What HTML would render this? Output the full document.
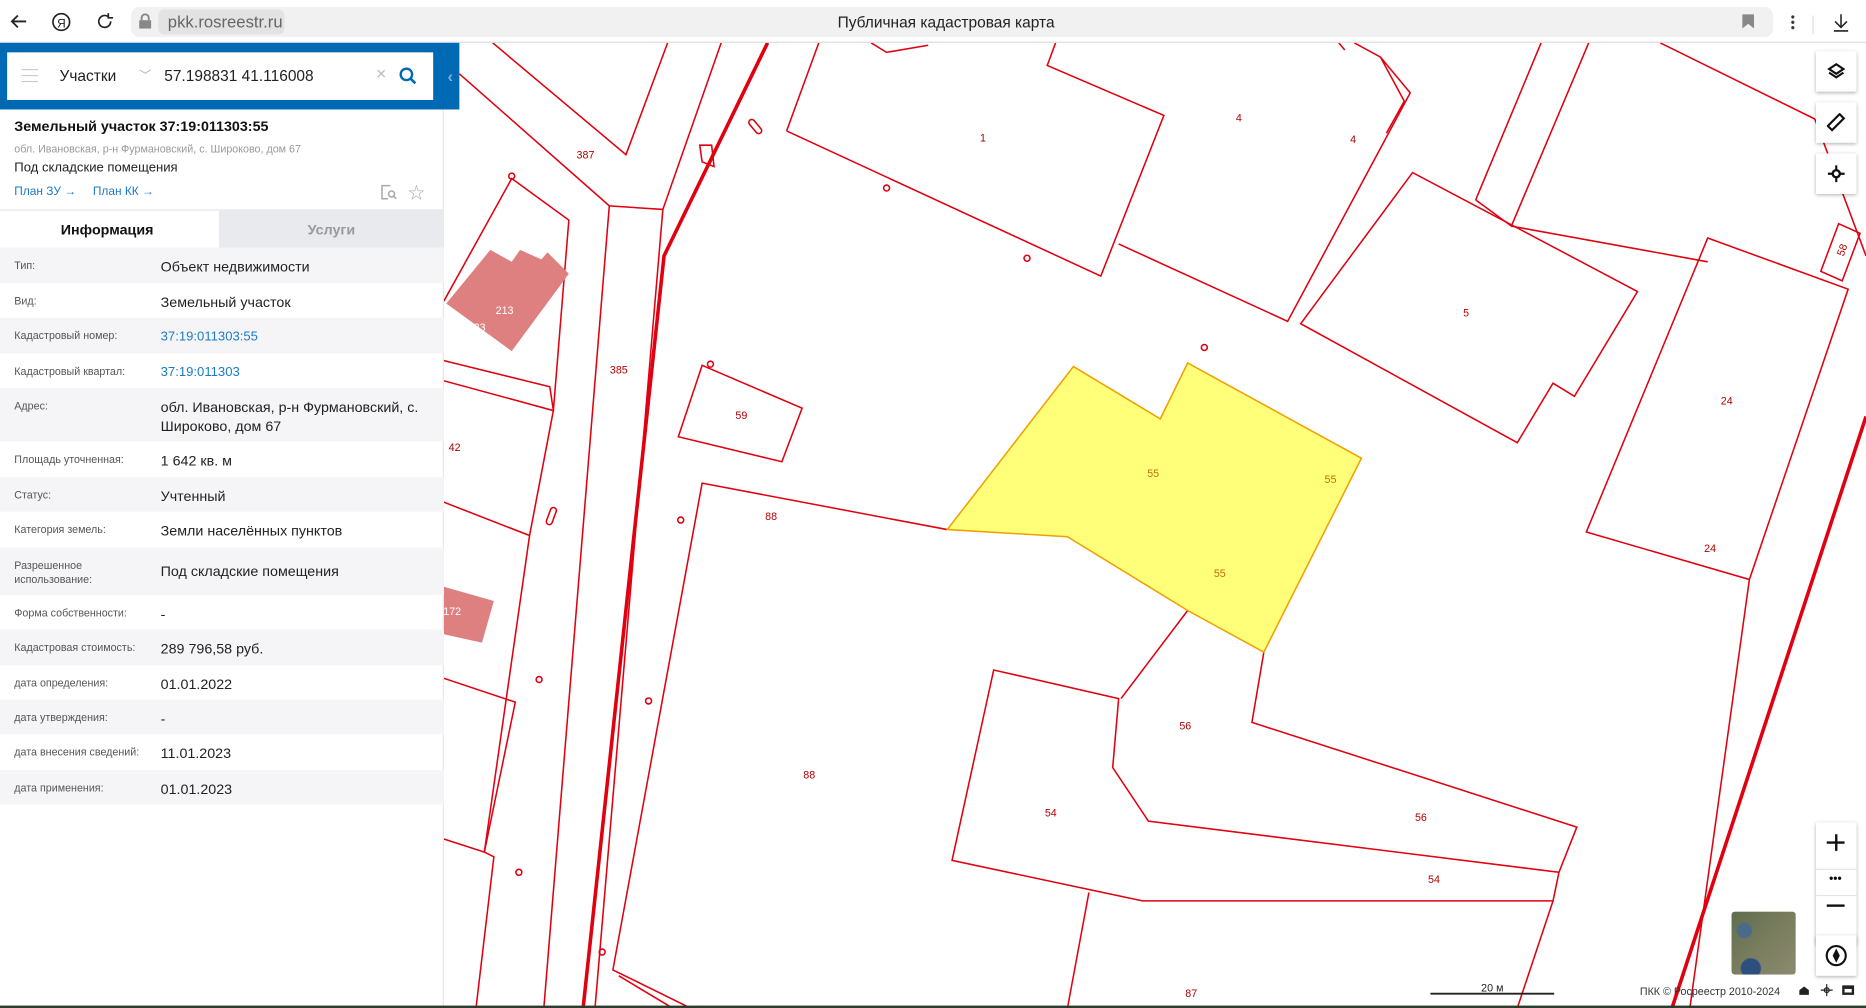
<!DOCTYPE html>
<html><head><meta charset="utf-8">
<style>
*{margin:0;padding:0;box-sizing:border-box}
html,body{width:1866px;height:1008px;overflow:hidden;background:#fff;font-family:"Liberation Sans","Noto Sans CJK SC",sans-serif}
#w{width:1568px;height:847px;transform:scale(1.19005);transform-origin:0 0;position:relative}
.top{position:absolute;left:0;top:0;width:1568px;height:36px;background:#fff;border-bottom:1px solid #ddd}
.url{position:absolute;left:110px;top:6px;width:1380px;height:25px;background:#f1f1f1;border-radius:7px}
.pill{position:absolute;left:133px;top:8px;width:106px;height:21px;background:#e3e3e3;border-radius:5px;color:#666;font-size:14px;line-height:21px;padding-left:8px}
.title{position:absolute;left:0;width:1590px;top:11px;text-align:center;font-size:13px;color:#222}
.panel{position:absolute;left:0;top:36px;width:373px;height:811px;background:#fff;border-right:1px solid #e6e6e6}
.blue{position:absolute;left:0;top:36px;width:386px;height:56px;background:#0069b4}
.sbox{position:absolute;left:6px;top:44px;width:358px;height:40px;background:#fff}
.row{position:absolute;left:0;width:373px;font-size:12px;color:#222}
.row .k{position:absolute;left:12px;top:9px;font-size:9px;color:#555;width:115px;line-height:12px}
.row .v{position:absolute;left:135px;top:8px;line-height:16px}
.g{background:#f5f5f7}
.map{position:absolute;left:373px;top:36px}
.btn{position:absolute;background:#fff;box-shadow:0 1px 3px rgba(0,0,0,.3);width:34px;height:34px}
</style></head><body><div id="w">
<div class="top">
<svg style="position:absolute;left:8px;top:10px" width="16" height="16"><path d="M14 8H2M7 3L2 8l5 5" stroke="#222" stroke-width="1.5" fill="none"/></svg>
<svg style="position:absolute;left:43px;top:10px" width="17" height="17"><circle cx="8.5" cy="8.5" r="7" stroke="#222" stroke-width="1.4" fill="none"/><text x="5" y="13" font-size="10" fill="#222" font-family="Liberation Sans">Я</text></svg>
<svg style="position:absolute;left:80px;top:10px" width="17" height="17"><path d="M13 8a5 5 0 1 1-2-4M11 1v4h4" stroke="#222" stroke-width="1.4" fill="none"/></svg>
<div class="url"></div>
<svg style="position:absolute;left:116px;top:11px" width="12" height="14"><rect x="1" y="6" width="10" height="7" fill="#888"/><path d="M3 6V4a3 3 0 0 1 6 0v2" stroke="#888" stroke-width="1.6" fill="none"/></svg>
<div class="pill">pkk.rosreestr.ru</div>
<div class="title">Публичная кадастровая карта</div>
<svg style="position:absolute;left:1464px;top:12px" width="10" height="12"><path d="M0 0h10v12l-5-4-5 4z" fill="#888"/></svg>
<div style="position:absolute;left:1505px;top:12px;width:3px;height:13px;background:radial-gradient(circle,#333 1.2px,transparent 1.5px) 0 0/3px 4.5px"></div>
<div style="position:absolute;left:1523px;top:13px;width:1px;height:16px;background:#ddd"></div>
<svg style="position:absolute;left:1540px;top:11px" width="14" height="16"><path d="M7 1v11M2 7l5 5 5-5M1 15h12" stroke="#222" stroke-width="1.3" fill="none"/></svg>
</div>

<svg class="map" width="1195" height="811" viewBox="373 36 1195 811">
<g fill="none" stroke="#e0000f" stroke-width="1.3">
<polyline points="386,62 512,173 557,176 606,36"/>
<polyline points="414,36 526,130 561,36"/>
<polyline points="512,173 457,847"/>
<polyline points="557,176 500,847"/>
<polyline points="373,253 430,150 478,185 465,345 462,325 373,303"/>
<polyline points="373,320 465,345 445,450 373,422"/>
<polyline points="445,450 407,716 373,705"/>
<polyline points="373,570 433,590 407,716"/>
<polyline points="407,716 415,720 400,847"/>
<polygon points="590,307 674,343 657,388 570,367"/>
<polyline points="580,847 515,815 590,406 796,445"/>
<polyline points="565,847 520,820"/>
<polyline points="661,110 688,36"/>
<polyline points="732,36 745,44 780,38"/>
<polyline points="661,110 925,232 978,97 880,55 887,36"/>
<polyline points="940,205 1082,270 1185,78 1160,48 1138,36"/>
<polyline points="1160,48 1180,85 1165,112"/>
<polyline points="1125,36 1130,42"/>
<polygon points="1093,272 1187,145 1376,245 1323,333 1305,322 1275,372"/>
<polyline points="1240,168 1295,36"/>
<polyline points="1240,168 1270,190 1335,36"/>
<polyline points="1270,190 1435,220"/>
<polyline points="1395,36 1525,100"/>
<polygon points="1333,447 1435,200 1553,243 1470,487"/>
<polygon points="1545,188 1563,196 1548,236 1530,228"/>
<polyline points="998,513 942,587"/>
<polyline points="1062,548 1052,607 1325,695 1310,733 965,690 935,645 940,587 835,563 800,723 960,757 1305,757 1310,733"/>
<polyline points="915,750 897,847"/>
<polyline points="1305,757 1275,847"/>
<polyline points="1470,487 1420,847"/>
<polyline points="1568,215 1525,100"/>
<circle cx="430" cy="148" r="2.5"/><circle cx="745" cy="158" r="2.5"/><circle cx="863" cy="217" r="2.5"/><circle cx="1012" cy="292" r="2.5"/><circle cx="597" cy="306" r="2.5"/><circle cx="572" cy="437" r="2.5"/><circle cx="453" cy="571" r="2.5"/><circle cx="545" cy="589" r="2.5"/><circle cx="436" cy="733" r="2.5"/><circle cx="506" cy="800" r="2.5"/>
<rect x="632" y="99" width="5" height="14" rx="2.5" transform="rotate(-40 635 106)"/>
<rect x="461" y="426" width="5" height="15" rx="2.5" transform="rotate(20 463 433)"/>
<polygon points="588,122 598,122 600,140 590,136"/>
</g>
<g fill="none" stroke="#e0000f" stroke-width="3"><polyline points="645,36 558,215 490,847"/><polyline points="1568,350 1405,847"/></g>
<polygon points="796,445 902,308 975,352 998,305 1144,385 1062,548 998,513 897,451" fill="#ffff7a" stroke="#f0a000" stroke-width="1.3"/>
<polygon points="375,255 412,210 430,220 437,210 455,218 460,212 478,230 430,295" fill="#de8080"/>
<polygon points="373,493 415,505 405,540 373,533" fill="#de8080"/>
<g font-size="9" fill="#b00000" font-family="Liberation Sans" text-anchor="middle">
<text x="492" y="133">387</text><text x="520" y="314">385</text><text x="424" y="264" fill="#fff">213</text><text x="403" y="278" fill="#fff">23</text><text x="382" y="379">42</text><text x="380" y="517" fill="#fff">172</text>
<text x="623" y="352">59</text><text x="648" y="437">88</text><text x="680" y="654">88</text><text x="826" y="119">1</text><text x="1041" y="102">4</text><text x="1137" y="120">4</text><text x="1232" y="266">5</text><text x="1451" y="340">24</text><text x="1437" y="464">24</text>
<text x="969" y="401" fill="#c07000">55</text><text x="1118" y="406" fill="#c07000">55</text><text x="1025" y="485" fill="#c07000">55</text>
<text x="996" y="613">56</text><text x="1194" y="690">56</text><text x="883" y="686">54</text><text x="1205" y="742">54</text><text x="1001" y="838">87</text>
<text x="1548" y="213" transform="rotate(-70 1548 210)">58</text>
</g>
<line x1="1202" y1="835" x2="1306" y2="835" stroke="#222" stroke-width="1.5"/>
<text x="1254" y="833" font-size="9" text-anchor="middle" fill="#222" font-family="Liberation Sans">20 м</text>
<text x="1378" y="836" font-size="9" fill="#333" font-family="Liberation Sans">ПКК © Росреестр 2010-2024</text>
<path d="M1512 836v-4l4-3 4 3v4z" fill="#222"/><circle cx="1535" cy="832" r="2" fill="none" stroke="#222"/><path d="M1535 827v10M1530 832h10" stroke="#222"/><rect x="1548" y="828" width="10" height="8" fill="#222"/><rect x="1550" y="831" width="6" height="3" fill="#fff"/>
</svg>

<div class="btn" style="left:1526px;top:43px"></div>
<svg style="position:absolute;left:1535px;top:52px" width="16" height="16"><path d="M8 2l6 4-6 4-6-4z" fill="none" stroke="#111" stroke-width="1.8"/><path d="M2 9l6 4 6-4" fill="none" stroke="#111" stroke-width="1.8"/></svg>
<div class="btn" style="left:1526px;top:86px"></div>
<svg style="position:absolute;left:1535px;top:95px" width="16" height="16"><rect x="5" y="1" width="5" height="14" transform="rotate(45 8 8)" fill="none" stroke="#111" stroke-width="1.8"/></svg>
<div class="btn" style="left:1526px;top:129px"></div>
<svg style="position:absolute;left:1535px;top:138px" width="16" height="16"><circle cx="8" cy="8" r="3" fill="none" stroke="#111" stroke-width="2"/><path d="M8 1v4M8 11v4M1 8h4M11 8h4" stroke="#111" stroke-width="1.8"/></svg>
<div class="btn" style="left:1526px;top:691px;height:103px"></div>
<div style="position:absolute;left:1526px;top:730px;width:34px;height:1px;background:#e5e5e5"></div>
<div style="position:absolute;left:1526px;top:752px;width:34px;height:1px;background:#e5e5e5"></div>
<div style="position:absolute;left:1535px;top:707px;width:15px;height:2px;background:#111"></div><div style="position:absolute;left:1541.5px;top:701px;width:2px;height:14px;background:#111"></div>
<div style="position:absolute;left:1537px;top:733px;font-size:10px;font-weight:bold;color:#111">•••</div>
<div style="position:absolute;left:1535px;top:760px;width:15px;height:2px;background:#111"></div>
<div class="btn" style="left:1526px;top:786px"></div>
<svg style="position:absolute;left:1533px;top:793px" width="20" height="20"><circle cx="10" cy="10" r="8" fill="none" stroke="#111" stroke-width="1.8"/><path d="M10 4l3 6-3 6-3-6z" fill="#111"/></svg>
<div style="position:absolute;left:1455px;top:766px;width:54px;height:53px;border-radius:3px;background:radial-gradient(circle at 20% 30%,#4a6a8a 0 6px,transparent 7px),radial-gradient(circle at 30% 90%,#2d4f80 0 8px,transparent 9px),linear-gradient(135deg,#5d6e4e,#7a7d5e,#8a8a70)"></div>

<div class="panel"></div>
<div class="blue"></div>
<div style="position:absolute;left:376px;top:56px;color:#7fb0e0;font-size:14px;font-weight:bold">‹</div>
<div class="sbox"></div>
<div style="position:absolute;left:18px;top:58px;width:14px;height:11px;border-top:1.5px solid #ccc;border-bottom:1.5px solid #ccc"><div style="margin-top:3.5px;height:1.5px;background:#ccc"></div></div>
<div style="position:absolute;left:50px;top:56px;font-size:13px;color:#222">Участки</div>
<div style="position:absolute;left:117px;top:55px;font-size:10px;color:#aaa">﹀</div>
<div style="position:absolute;left:138px;top:56px;font-size:13px;color:#222">57.198831 41.116008</div>
<div style="position:absolute;left:316px;top:54px;font-size:15px;color:#bbb">×</div>
<svg style="position:absolute;left:335px;top:56px" width="16" height="16"><circle cx="6.5" cy="6.5" r="4.8" fill="none" stroke="#0069b4" stroke-width="2"/><path d="M10 10l4 4" stroke="#0069b4" stroke-width="2.2"/></svg>
<div style="position:absolute;left:12px;top:99px;font-size:12px;font-weight:bold;color:#111">Земельный участок 37:19:011303:55</div>
<div style="position:absolute;left:12px;top:120px;font-size:9px;color:#999">обл. Ивановская, р-н Фурмановский, с. Широково, дом 67</div>
<div style="position:absolute;left:12px;top:135px;font-size:11px;color:#222">Под складские помещения</div>
<div style="position:absolute;left:12px;top:156px;font-size:10px;color:#1a7bc9">План ЗУ →</div>
<div style="position:absolute;left:78px;top:156px;font-size:10px;color:#1a7bc9">План КК →</div>
<svg style="position:absolute;left:320px;top:155px" width="14" height="13"><path d="M8 1H1v11h5" fill="none" stroke="#aaa" stroke-width="1.3"/><circle cx="9" cy="8" r="2.5" fill="none" stroke="#aaa" stroke-width="1.3"/><path d="M11 10l2 2" stroke="#aaa" stroke-width="1.3"/></svg>
<div style="position:absolute;left:343px;top:152px;font-size:14px;color:#aaa">☆</div>
<div style="position:absolute;left:0;top:176px;width:373px;height:1px;background:#e5e5ea"></div>
<div style="position:absolute;left:184px;top:177px;width:189px;height:31px;background:#e8eaee"></div>
<div style="position:absolute;left:0;top:186px;width:180px;text-align:center;font-size:12px;font-weight:bold;color:#111">Информация</div>
<div style="position:absolute;left:184px;top:186px;width:189px;text-align:center;font-size:12px;font-weight:bold;color:#999">Услуги</div>

<div class="row g" style="top:208px;height:30px"><div class="k">Тип:</div><div class="v">Объект недвижимости</div></div>
<div class="row" style="top:238px;height:29px"><div class="k">Вид:</div><div class="v">Земельный участок</div></div>
<div class="row g" style="top:267px;height:30px"><div class="k">Кадастровый номер:</div><div class="v" style="color:#1a7bc9;font-size:11px">37:19:011303:55</div></div>
<div class="row" style="top:297px;height:29px"><div class="k">Кадастровый квартал:</div><div class="v" style="color:#1a7bc9;font-size:11px">37:19:011303</div></div>
<div class="row g" style="top:326px;height:45px"><div class="k">Адрес:</div><div class="v" style="width:230px">обл. Ивановская, р-н Фурмановский, с. Широково, дом 67</div></div>
<div class="row" style="top:371px;height:30px"><div class="k">Площадь уточненная:</div><div class="v">1 642 кв. м</div></div>
<div class="row g" style="top:401px;height:29px"><div class="k">Статус:</div><div class="v">Учтенный</div></div>
<div class="row" style="top:430px;height:30px"><div class="k">Категория земель:</div><div class="v">Земли населённых пунктов</div></div>
<div class="row g" style="top:460px;height:40px"><div class="k">Разрешенное использование:</div><div class="v" style="top:12px">Под складские помещения</div></div>
<div class="row" style="top:500px;height:29px"><div class="k">Форма собственности:</div><div class="v">-</div></div>
<div class="row g" style="top:529px;height:30px"><div class="k">Кадастровая стоимость:</div><div class="v">289 796,58 руб.</div></div>
<div class="row" style="top:559px;height:29px"><div class="k">дата определения:</div><div class="v">01.01.2022</div></div>
<div class="row g" style="top:588px;height:29px"><div class="k">дата утверждения:</div><div class="v">-</div></div>
<div class="row" style="top:617px;height:30px"><div class="k">дата внесения сведений:</div><div class="v">11.01.2023</div></div>
<div class="row g" style="top:647px;height:29px"><div class="k">дата применения:</div><div class="v">01.01.2023</div></div>
<div style="position:absolute;left:0;top:845px;width:1568px;height:2px;background:#2a3a2a"></div>
</div></body></html>
